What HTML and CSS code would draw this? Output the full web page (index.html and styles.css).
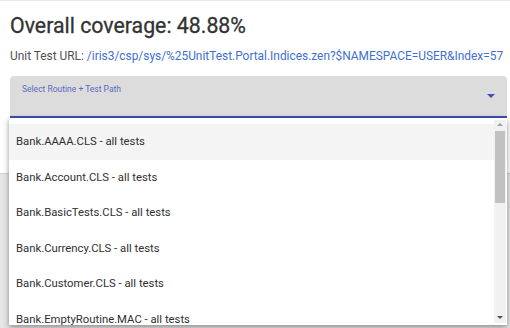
FILE: index.html
```html
<!DOCTYPE html>
<html lang="en">

<head>
    <meta charset="UTF-8">
    <meta name="viewport" content="width=device-width, initial-scale=1.0">
    <title>Coverage</title>

    <link rel="stylesheet" href="styles.css">
</head>

<body>
    <div class="page">
        <h1 class="title">Overall coverage: 48.88%</h1>
        <p class="url">Unit Test URL: <a href="#">/iris3/csp/sys/%25UnitTest.Portal.Indices.zen?$NAMESPACE=USER&amp;Index=57</a></p>

        <div class="select">
            <span class="label">Select Routine + Test Path</span>
            <span class="arrow"></span>
        </div>

        <div class="panel"></div>

        <div class="menu">
            <ul class="list">
                <li class="item active">Bank.AAAA.CLS - all tests</li>
                <li class="item">Bank.Account.CLS - all tests</li>
                <li class="item">Bank.BasicTests.CLS - all tests</li>
                <li class="item">Bank.Currency.CLS - all tests</li>
                <li class="item">Bank.Customer.CLS - all tests</li>
                <li class="item">Bank.EmptyRoutine.MAC - all tests</li>
            </ul>
            <div class="scrollbar">
                <span class="btn up"></span>
                <span class="thumb"></span>
                <span class="btn down"></span>
            </div>
        </div>
    </div>
</body>

</html>
```

FILE: styles.css
```css
* {
    box-sizing: border-box;
}

body {
    margin: 0;
    font-family: Roboto, "Liberation Sans", sans-serif;
    background-color: #fff;
}

.page {
    position: relative;
    height: 328px;
    padding: 12px 3px 0 10px;
    border-top: 1px solid #e8e8e8;
    overflow: hidden;
}

.title {
    margin: 0;
    font-size: 21.3px;
    font-weight: 400;
    line-height: 26px;
    color: #333;
    -webkit-text-stroke: 0.3px #333;
}

.url {
    margin: 10px 0 0;
    font-size: 11.9px;
    line-height: 15px;
    color: #505050;
    white-space: nowrap;
}

.url a {
    color: #3f6fcf;
    text-decoration: none;
}

.select {
    position: relative;
    height: 42px;
    margin-top: 12px;
    padding: 7px 12px;
    background-color: #dcdcdc;
    border-radius: 4px 4px 0 0;
    border-bottom: 2px solid #3f51b5;
}

.label {
    display: block;
    font-size: 8.5px;
    line-height: 12px;
    color: #5b6bbf;
}

.arrow {
    position: absolute;
    top: 18px;
    right: 12px;
    width: 0;
    height: 0;
    border-left: 4px solid transparent;
    border-right: 4px solid transparent;
    border-top: 4px solid #3f51b5;
}

.panel {
    height: 180px;
    margin: 55px -3px 0 -10px;
    background-color: #e6e6e6;
    border-top: 1px solid #d0d0d0;
}

.menu {
    position: absolute;
    top: 117px;
    left: 9px;
    width: 498px;
    height: 207px;
    padding-top: 6px;
    background-color: #fff;
    box-shadow: 0 3px 6px rgba(0, 0, 0, .3), 0 0 4px rgba(0, 0, 0, .15);
    overflow: hidden;
}

.list {
    margin: 0;
    padding: 0;
    list-style: none;
}

.item {
    height: 35.6px;
    padding-left: 7px;
    font-size: 11.3px;
    line-height: 35.6px;
    color: #303030;
    white-space: nowrap;
}

.item.active {
    background-color: #f4f4f4;
}

.scrollbar {
    position: absolute;
    top: 2px;
    right: 1px;
    bottom: 2px;
    width: 12px;
    display: flex;
    flex-direction: column;
    align-items: center;
    background-color: #f1f1f1;
}

.btn {
    width: 0;
    height: 0;
}

.up {
    flex: 0 0 3px;
    margin-top: 3px;
    margin-bottom: 5px;
    border-left: 3px solid transparent;
    border-right: 3px solid transparent;
    border-bottom: 3px solid #a0a0a0;
}

.thumb {
    width: 10px;
    height: 72px;
    background-color: #c1c1c1;
}

.down {
    flex: 0 0 3px;
    margin-top: auto;
    margin-bottom: 4px;
    border-left: 3px solid transparent;
    border-right: 3px solid transparent;
    border-top: 3px solid #505050;
}
```
